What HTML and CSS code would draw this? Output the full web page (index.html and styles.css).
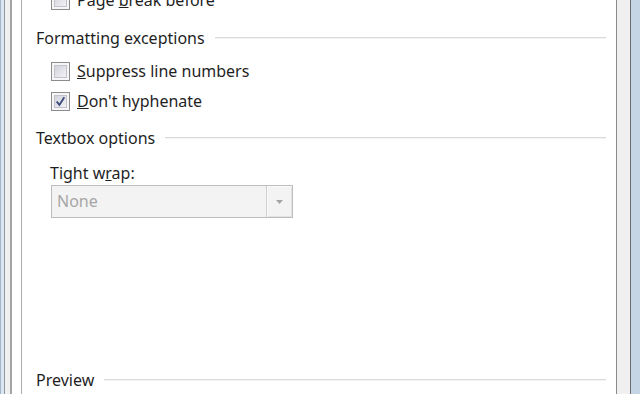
FILE: index.html
```html
<!DOCTYPE html>
<html lang="en">
<head>
    <meta charset="UTF-8">
    <title>Paragraph: Line and Page Breaks</title>
    <link rel="stylesheet" href="styles.css">
</head>
<body>

<div class="screen">
    <div class="edge-left"></div>
    <div class="dialog">
        <div class="tab">
            <div class="panel">
                <div class="row first">
                    <span class="box"><span class="box-in"></span></span>
                    <span>Page <u>b</u>reak before</span>
                </div>

                <div class="group-head head-format">
                    <span>Formatting exceptions</span>
                    <span class="rule"></span>
                </div>
                <div class="row row-suppress">
                    <span class="box"><span class="box-in"></span></span>
                    <span><u>S</u>uppress line numbers</span>
                </div>
                <div class="row row-hyphen">
                    <span class="box"><span class="box-in">
                        <svg width="13" height="13" viewBox="0 0 13 13"><path d="M2 6.5 L5.2 10.5 L11 1.5" fill="none" stroke="#3b4b7c" stroke-width="2.2"/></svg>
                    </span></span>
                    <span><u>D</u>on't hyphenate</span>
                </div>

                <div class="group-head head-textbox">
                    <span>Textbox options</span>
                    <span class="rule"></span>
                </div>
                <div class="label">Tight w<u>r</u>ap:</div>
                <div class="select">
                    <span class="select-value">None</span>
                    <span class="select-btn">
                        <svg width="7" height="4" viewBox="0 0 7 4"><polygon points="0,0 7,0 3.5,4" fill="#a4a4a4"/></svg>
                    </span>
                </div>

                <div class="group-head head-preview">
                    <span>Preview</span>
                    <span class="rule"></span>
                </div>
            </div>
        </div>
    </div>
    <div class="edge-right"></div>
</div>

</body>
</html>
```

FILE: styles.css
```css
* {
    box-sizing: border-box;
}
body {
    margin: 0;
    font-family: 'Noto Sans', 'Liberation Sans', sans-serif;
    font-size: 16px;
    color: #1f1f1f;
    background-color: #d6e2ee;
}
.screen {
    display: flex;
    height: 394px;
    overflow: hidden;
}
.edge-left {
    width: 4px;
    border-left: 1px solid #a3b5c8;
    background-color: #dbe6f1; /* window glass */
}
.edge-right {
    width: 9px;
    background-color: #c6d5e5;
}
.dialog {
    flex: 1;
    display: flex;
    border-left: 1px solid #8d97a3;
    border-right: 1px solid #6c6c6c;
    background-color: #f0f0f0;
    padding: 0 13px 0 5px;
}
.tab {
    flex: 1;
    display: flex;
    border-left: 2px solid #a4a4a4;
    background-color: #fff;
    padding-left: 9px;
}
.panel {
    flex: 1;
    border-left: 1px solid #ababab;
    border-right: 1px solid #8a8a8a;
    background-color: #fff;
    padding: 0 10px 0 14px;
}

/* group headings with the etched rule */
.group-head {
    display: flex;
    align-items: center;
    height: 20px;
    line-height: 20px;
}
.rule {
    flex: 1;
    margin-left: 10px;
    border-top: 1px solid #dadada;
    border-bottom: 1px solid #f4f4f4;
}
.head-format { margin-top: 18px; }
.head-textbox { margin-top: 17px; }
.head-preview { margin-top: 152px; }

/* checkbox rows */
.row {
    display: flex;
    align-items: center;
    height: 20px;
    line-height: 20px;
    padding-left: 15px;
}
.row.first { margin-top: -10px; }
.row-suppress { margin-top: 13px; }
.row-hyphen { margin-top: 10px; }
.box {
    flex: none;
    width: 19px;
    height: 19px;
    margin-right: 7px;
    border: 1px solid #8c8c8c;
    background-color: #f6f6f6;
    padding: 2px;
}
.box-in {
    display: flex;
    align-items: center;
    justify-content: center;
    height: 100%;
    border: 1px solid #c2c2ca;
    background: linear-gradient(135deg, #d2d2dc, #f2f2f5);
}

.label {
    margin-top: 15px;
    height: 20px;
    line-height: 20px;
    padding-left: 14px;
}
.select {
    display: flex;
    margin: 2px 0 0 15px;
    width: 242px;
    height: 33px;
    border: 1px solid #bdbdbd;
    background-color: #f3f3f3;
}
.select-value {
    flex: 1;
    padding-left: 5px;
    line-height: 31px;
    color: #a6a6a6;
}
.select-btn {
    width: 26px;
    display: flex;
    align-items: center;
    justify-content: center;
    border-left: 1px solid #cfcfcf;
    box-shadow: inset 1px 1px 0 #fafafa, inset -1px -1px 0 #e2e2e2;
}
```
